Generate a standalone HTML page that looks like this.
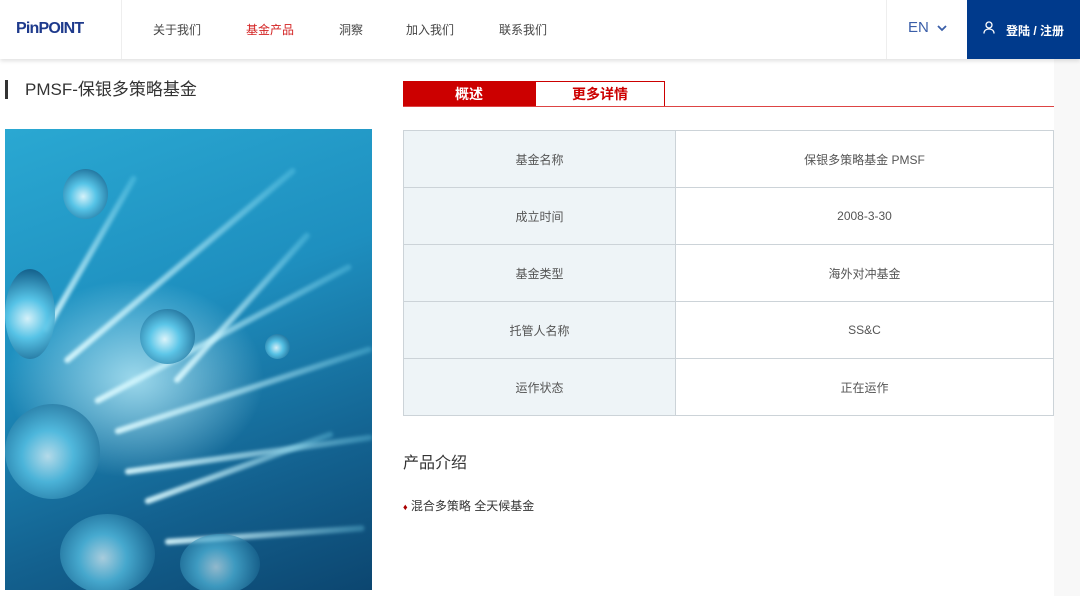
<!DOCTYPE html>
<html><head><meta charset="utf-8"><style>
*{margin:0;padding:0;box-sizing:border-box}
body{width:1080px;height:596px;overflow:hidden;background:#f8f8f8;font-family:"Liberation Sans","Noto Sans CJK SC",sans-serif;position:relative}
.main{position:absolute;left:0;top:0;width:1054px;height:596px;background:#fff}
.hdr{position:absolute;left:0;top:0;width:1080px;height:59px;background:#fff;box-shadow:0 2px 4px rgba(0,0,0,.12);z-index:2}
.logo{position:absolute;left:16px;top:20px;font-weight:bold;font-size:16px;color:#1e3a8c;letter-spacing:-0.8px}
.vl{position:absolute;top:0;width:1px;height:59px;background:#eee}
.nav{position:absolute;top:21px;font-size:12px;color:#444}
.en{position:absolute;left:908px;top:19px;font-size:15px;color:#3a5ea8}
.login{position:absolute;left:967px;top:0;width:113px;height:59px;background:#003a8c;color:#fff;font-size:12px;font-weight:bold}
.title{position:absolute;left:5px;top:80px;border-left:3px solid #333;padding-left:17px;font-size:17px;color:#333;line-height:19px}
.img{position:absolute;left:5px;top:129px;width:367px;height:461px;overflow:hidden;background:linear-gradient(160deg,#2aa8d2 0%,#1e8fbf 40%,#13618f 75%,#0c4670 100%)}
.img b{position:absolute;height:6px;border-radius:3px;background:linear-gradient(90deg,rgba(220,250,255,.9),rgba(120,220,245,.3));transform-origin:0 50%;filter:blur(1.5px)}
.img i{position:absolute;border-radius:50%;background:radial-gradient(circle at 45% 55%,#e8fbff 0%,#5cc8ea 35%,#155f8a 85%);opacity:.9}
.glow{position:absolute;left:0;top:150px;width:260px;height:200px;background:radial-gradient(ellipse,rgba(200,245,255,.75),rgba(120,210,240,0) 70%)}
.tab1{position:absolute;left:403px;top:81px;width:132px;height:26px;background:#cc0000;color:#fff;font-weight:bold;font-size:14px;text-align:center;line-height:26px}
.tab2{position:absolute;left:535px;top:81px;width:130px;height:26px;border:1px solid #cc0000;border-bottom:none;color:#cc0000;font-weight:bold;font-size:14px;text-align:center;line-height:25px}
.tline{position:absolute;left:403px;top:106px;width:651px;height:1px;background:#d44}
table{position:absolute;left:403px;top:130px;width:651px;border-collapse:collapse;font-size:12px;color:#555}
td{border:1px solid #ccd3d8;height:57px;text-align:center}
td.k{background:#eef4f7;width:272px}
.h2{position:absolute;left:403px;top:449px;font-size:16px;color:#333}
.p{position:absolute;left:403px;top:497px;font-size:12px;color:#333}
</style></head><body>
<div class="main"></div>
<div class="hdr">
<div class="logo">PinPOINT</div>
<div class="vl" style="left:121px"></div>
<div class="nav" style="left:153px">关于我们</div>
<div class="nav" style="left:246px;color:#d32222">基金产品</div>
<div class="nav" style="left:339px">洞察</div>
<div class="nav" style="left:406px">加入我们</div>
<div class="nav" style="left:499px">联系我们</div>
<div class="vl" style="left:886px"></div>
<div class="en">EN <svg width="10" height="8" viewBox="0 0 10 8" style="margin-left:4px"><path d="M1 2l4 4 4-4" stroke="#3a5ea8" stroke-width="1.8" fill="none"/></svg></div>
<div class="login"><svg style="position:absolute;left:16px;top:21px" width="12" height="13" viewBox="0 0 12 13"><circle cx="6" cy="4" r="3" stroke="#fff" stroke-width="1.3" fill="none"/><path d="M1 12.5c0-3 2.2-4.5 5-4.5s5 1.5 5 4.5" stroke="#fff" stroke-width="1.3" fill="none"/></svg><span style="position:absolute;left:39px;top:22px">登陆 / 注册</span></div>
</div>
<div class="title">PMSF-保银多策略基金</div>
<div class="img">
<div class="glow"></div>
<b style="left:60px;top:230px;width:300px;transform:rotate(-40deg)"></b>
<b style="left:90px;top:270px;width:290px;transform:rotate(-28deg)"></b>
<b style="left:110px;top:300px;width:270px;transform:rotate(-18deg)"></b>
<b style="left:120px;top:340px;width:250px;transform:rotate(-8deg)"></b>
<b style="left:140px;top:370px;width:200px;transform:rotate(-20deg)"></b>
<b style="left:160px;top:410px;width:200px;transform:rotate(-4deg)"></b>
<b style="left:40px;top:200px;width:180px;transform:rotate(-60deg)"></b>
<b style="left:170px;top:250px;width:200px;transform:rotate(-48deg)"></b>
<i style="left:58px;top:40px;width:45px;height:50px"></i>
<i style="left:0;top:140px;width:50px;height:90px"></i>
<i style="left:0;top:275px;width:95px;height:95px;opacity:.75"></i>
<i style="left:135px;top:180px;width:55px;height:55px"></i>
<i style="left:55px;top:385px;width:95px;height:80px;opacity:.7"></i>
<i style="left:175px;top:405px;width:80px;height:60px;opacity:.6"></i>
<i style="left:260px;top:205px;width:25px;height:25px"></i>
</div>
<div class="tab1">概述</div>
<div class="tab2">更多详情</div>
<div class="tline"></div>
<table>
<tr><td class="k">基金名称</td><td>保银多策略基金 PMSF</td></tr>
<tr><td class="k">成立时间</td><td>2008-3-30</td></tr>
<tr><td class="k">基金类型</td><td>海外对冲基金</td></tr>
<tr><td class="k">托管人名称</td><td>SS&amp;C</td></tr>
<tr><td class="k">运作状态</td><td>正在运作</td></tr>
</table>
<div class="h2">产品介绍</div>
<div class="p" style="font-weight:normal"><span style="color:#a00;font-size:9px">♦</span> 混合多策略 全天候基金</div>
</body></html>
